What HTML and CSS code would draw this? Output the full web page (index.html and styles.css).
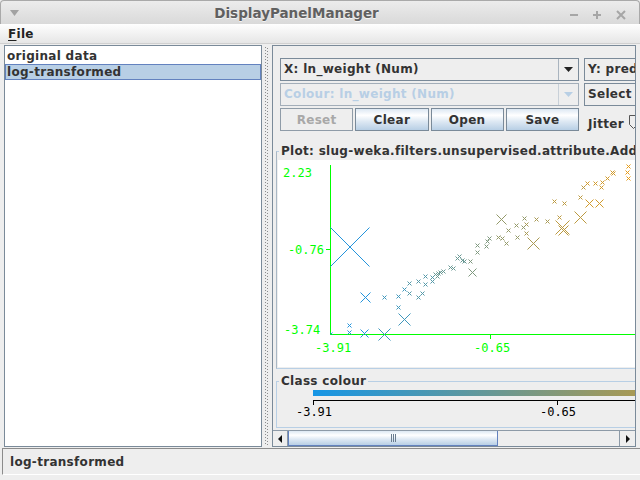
FILE: index.html
```html
<!DOCTYPE html>
<html>
<head>
<meta charset="utf-8">
<title>DisplayPanelManager</title>
<link rel="stylesheet" href="styles.css">
</head>
<body>
<div class="window">
  <div class="titlebar">
    <div class="tb-left">
      <svg width="9" height="6" viewBox="0 0 9 6"><path d="M0 0h9l-4.5 6z" fill="#a2a2a2"/></svg>
    </div>
    <div class="title">DisplayPanelManager</div>
    <div class="tb-right">
      <svg width="77" height="24" viewBox="0 0 77 24">
        <g stroke="#a6a6a6" stroke-width="2" fill="none">
          <path d="M8 14h8"/>
          <path d="M31 14h8M35 10v8"/>
          <path d="M55 10l8 8M63 10l-8 8"/>
        </g>
      </svg>
    </div>
  </div>
  <div class="menubar"><span class="menu"><u>F</u>ile</span></div>
  <div class="main">
    <div class="list">
      <div class="item">original data</div>
      <div class="item selected">log-transformed</div>
    </div>
    <div class="divider"><div class="grip"></div></div>
    <div class="pane">
      <div class="viewport">
        <div class="content">
          <div class="controls">
            <div class="col-left">
              <div class="combo">
                <span class="combo-text">X: ln_weight (Num)</span>
                <span class="combo-btn"><svg width="9" height="5" viewBox="0 0 9 5"><path d="M0 0h9l-4.5 5z" fill="#222"/></svg></span>
              </div>
              <div class="combo disabled">
                <span class="combo-text">Colour: ln_weight (Num)</span>
                <span class="combo-btn"><svg width="9" height="5" viewBox="0 0 9 5"><path d="M0 0h9l-4.5 5z" fill="#b8cfe5"/></svg></span>
              </div>
              <div class="buttons">
                <button class="btn" disabled>Reset</button>
                <button class="btn">Clear</button>
                <button class="btn">Open</button>
                <button class="btn">Save</button>
              </div>
            </div>
            <div class="col-right">
              <div class="combo">
                <span class="combo-text">Y: predicted ln_weight (Num)</span>
              </div>
              <div class="combo">
                <span class="combo-text">Select instance</span>
              </div>
              <div class="jitter">
                <span>Jitter</span>
                <svg class="thumb" width="12" height="16" viewBox="0 0 12 16"><path d="M1.5 1.5h8v9l-4 4l-4-4z" fill="#eeeeee" stroke="#555" stroke-width="1"/></svg>
              </div>
            </div>
          </div>

          <fieldset class="group plot-group">
            <legend>Plot: slug-weka.filters.unsupervised.attribute.AddExpression-Eln_weight</legend>
            <div class="plot">
              <svg width="600" height="207" viewBox="0 0 600 207">
                <g stroke="#00ff00" stroke-width="1" shape-rendering="crispEdges">
                  <path d="M52.5 5v170"/>
                  <path d="M52 174.5h548"/>
                  <path d="M212.5 174v5"/>
                  <path d="M48 89.5h5"/>
                </g>
                <g class="lbl" fill="#00ff00">
                  <text x="5" y="17">2.23</text>
                  <text x="46" y="94" text-anchor="end">-0.76</text>
                  <text x="6" y="173.5">-3.74</text>
                  <text x="37" y="191.5">-3.91</text>
                  <text x="196" y="191.5">-0.65</text>
                </g>
                <g fill="none" stroke-width="1" transform="translate(0.5 0.5)">
                  <path stroke="#e69b16" d="M348 4l4 4m0-4l-4 4M348 16l4 4m0-4l-4 4M347 10l4 4m0-4l-4 4"/>
                  <path stroke="#d19a2b" d="M333 11l4 4m0-4l-4 4M332 10l4 4m0-4l-4 4M327 16l4 4m0-4l-4 4M322 20l4 4m0-4l-4 4M315 21l4 4m0-4l-4 4M307 21l4 4m0-4l-4 4M321 25l4 4m0-4l-4 4M307 39l8 8m0-8l-8 8M317 39l8 8m0-8l-8 8"/>
                  <path stroke="#bc9a40" d="M303 25l4 4m0-4l-4 4M300 35l4 4m0-4l-4 4M296 51l12 12m0-12l-12 12M274 39l4 4m0-4l-4 4M284 41l4 4m0-4l-4 4M277 60l14 14m0-14l-14 14M280 65l10 10m0-10l-10 10M279 55l4 4m0-4l-4 4"/>
                  <path stroke="#a89954" d="M267 59l4 4m0-4l-4 4M256 57l4 4m0-4l-4 4M246 62l4 4m0-4l-4 4M249 77l12 12m0-12l-12 12M246 71l4 4m0-4l-4 4"/>
                  <path stroke="#939969" d="M244 56l4 4m0-4l-4 4M236 63l4 4m0-4l-4 4M243 65l4 4m0-4l-4 4M228 68l4 4m0-4l-4 4M237 75l4 4m0-4l-4 4M218 54l10 10m0-10l-10 10M218 75l4 4m0-4l-4 4M222 76l4 4m0-4l-4 4M226 81l4 4m0-4l-4 4"/>
                  <path stroke="#7e987e" d="M209 76l4 4m0-4l-4 4M207 79l4 4m0-4l-4 4M197 83l4 4m0-4l-4 4M206 84l4 4m0-4l-4 4M197 90l4 4m0-4l-4 4M190 99l4 4m0-4l-4 4M190 108l8 8m0-8l-8 8"/>
                  <path stroke="#699893" d="M179 94l4 4m0-4l-4 4M177 96l4 4m0-4l-4 4M182 98l4 4m0-4l-4 4M184 99l4 4m0-4l-4 4M170 105l4 4m0-4l-4 4M173 106l4 4m0-4l-4 4M163 109l4 4m0-4l-4 4M160 110l4 4m0-4l-4 4M158 111l4 4m0-4l-4 4M155 112l4 4m0-4l-4 4M157 114l4 4m0-4l-4 4"/>
                  <path stroke="#5498a8" d="M152 115l4 4m0-4l-4 4M145 114l4 4m0-4l-4 4M152 119l4 4m0-4l-4 4M138 119l4 4m0-4l-4 4M145 122l4 4m0-4l-4 4M129 121l4 4m0-4l-4 4M129 131l4 4m0-4l-4 4M142 131l4 4m0-4l-4 4M138 135l4 4m0-4l-4 4"/>
                  <path stroke="#4097bc" d="M124 127l4 4m0-4l-4 4M118 134l4 4m0-4l-4 4M104 135l4 4m0-4l-4 4M118 145l4 4m0-4l-4 4M120 153l12 12m0-12l-12 12M100 168l12 12m0-12l-12 12"/>
                  <path stroke="#2394dc" d="M82 132l10 10m0-10l-10 10M69 163l4 4m0-4l-4 4M69 170l4 4m0-4l-4 4M82 169l8 8m0-8l-8 8M52 67l39 39m0-39l-39 39"/>
                  <path stroke="#1696e6" d="M52 172l2 2m0-2l-2 2"/>
                </g>
              </svg>
            </div>
          </fieldset>

          <fieldset class="group class-group">
            <legend>Class colour</legend>
            <div class="colour-bar"></div>
            <svg class="axis" width="600" height="30" viewBox="0 0 600 30">
              <g stroke="#000" stroke-width="1" shape-rendering="crispEdges">
                <path d="M35 4.5h565"/>
                <path d="M35.5 4v5M279.5 4v5"/>
              </g>
              <g class="lbl" fill="#000" text-anchor="middle">
                <text x="36" y="19.5">-3.91</text>
                <text x="280" y="19.5">-0.65</text>
              </g>
            </svg>
          </fieldset>
        </div>
      </div>
      <div class="hscroll">
        <div class="sb-btn"><svg width="5" height="8" viewBox="0 0 5 8"><path d="M4 0v8L0 4z" fill="#111"/></svg></div>
        <div class="sb-thumb"><span class="grip-lines"></span></div>
        <div class="sb-track"></div>
        <div class="sb-btn sb-right"><svg width="5" height="8" viewBox="0 0 5 8"><path d="M1 0v8l4-4z" fill="#111"/></svg></div>
      </div>
    </div>
  </div>
  <div class="status"><div class="status-box">log-transformed</div></div>
</div>
</body>
</html>
```

FILE: styles.css
```css
* { box-sizing: border-box; }
html, body { margin: 0; padding: 0; }
body {
  background: #eeeeee;
  font-family: "DejaVu Sans", "Liberation Sans", sans-serif;
  font-size: 12px;
  font-weight: bold;
  letter-spacing: 0.3px;
  color: #333333;
}
.window {
  width: 640px;
  height: 480px;
  display: flex;
  flex-direction: column;
  overflow: hidden;
  background: #eeeeee;
}

/* title bar */
.titlebar {
  flex: none;
  height: 24px;
  display: flex;
  align-items: center;
  background: linear-gradient(#ececec, #d9d9d9);
  border: 1px solid #a9a9a9;
  border-bottom: none;
  border-radius: 4px 4px 0 0;
  color: #606060;
  letter-spacing: 0;
}
.tb-left {
  width: 30px;
  padding-left: 9px;
  display: flex;
  align-items: center;
}
.title {
  flex: 1;
  text-align: center;
  font-size: 13.5px;
  text-shadow: 0 1px 0 rgba(255, 255, 255, 0.7);
}
.tb-right { width: 77px; display: flex; }

/* menu bar */
.menubar {
  flex: none;
  height: 20px;
  display: flex;
  align-items: center;
  padding-left: 8px;
  background: linear-gradient(#fefefe, #e6e6e6);
  border-bottom: 1px solid #d0d0d0;
  color: #222;
}
.menu u { text-decoration: underline; text-underline-offset: 2px; }

/* main split */
.main {
  flex: none;
  height: 404px;
  display: flex;
  padding: 1px 0 1px 4px;
}
.list {
  width: 258px;
  flex: none;
  background: #ffffff;
  border: 1px solid #7a8a99;
  padding-top: 2px;
}
.item {
  height: 16px;
  line-height: 14px;
  padding-left: 1px;
  border: 1px solid transparent;
  white-space: nowrap;
}
.item.selected {
  background: #b8cfe5;
  border-color: #6382bf;
}
.divider {
  width: 10px;
  flex: none;
  padding: 2px 0 2px 3px;
}
.grip {
  width: 3px;
  height: 100%;
  background-image:
    repeating-linear-gradient(#8c8c8c 0 1px, transparent 1px 3px),
    repeating-linear-gradient(transparent 0 1px, #8c8c8c 1px 2px, transparent 2px 3px);
  background-size: 1px 100%, 1px 100%;
  background-position: 0 0, 2px 0;
  background-repeat: no-repeat;
}
.pane {
  width: 364px;
  flex: none;
  border: 1px solid #7a8a99;
  display: flex;
  flex-direction: column;
}
.viewport {
  flex: 1;
  overflow: hidden;
}
.content { width: 800px; }

/* controls */
.controls {
  display: flex;
  gap: 5px;
  margin: 12px 0 0 7px;
}
.col-left, .col-right {
  display: flex;
  flex-direction: column;
  gap: 2px;
}
.col-left { width: 299px; }
.col-right { width: 240px; }
.combo {
  height: 23px;
  display: flex;
  border: 1px solid #7a8a99;
  background: #eeeeee;
}
.combo-text {
  flex: 1;
  padding-left: 3px;
  line-height: 21px;
  white-space: nowrap;
  overflow: hidden;
}
.combo-btn {
  width: 20px;
  display: flex;
  align-items: center;
  justify-content: center;
  border-left: 1px solid #a9b4bf;
}
.combo.disabled { border-color: #a3aeb9; }
.combo.disabled .combo-text { color: #b8cfe5; }
.combo.disabled .combo-btn { border-left-color: #c8d0d8; }
.buttons {
  display: grid;
  grid-template-columns: repeat(4, 1fr);
  gap: 2px;
}
.btn {
  height: 23px;
  margin: 0;
  padding: 0;
  font: inherit;
  letter-spacing: inherit;
  color: #333333;
  border: 1px solid #7a8a99;
  background: linear-gradient(#dde8f3 0%, #ffffff 30%, #dde8f3 60%, #b8cfe5 100%);
}
.btn:disabled {
  background: #eeeeee;
  color: #a8a8a8;
  border-color: #8f9ca8;
}
.jitter {
  height: 23px;
  display: flex;
  align-items: flex-end;
  gap: 4px;
  padding-left: 4px;
  line-height: 14px;
}
.thumb { margin-bottom: 1px; }

/* titled groups */
.group {
  margin: 0;
  border: 1px solid #b8cfe5;
  padding: 2px 0 1px 1px;
  min-width: 0;
}
.group legend {
  padding: 0 2px;
  margin-left: 1px;
  line-height: 14px;
  white-space: nowrap;
  color: #333333;
}
.plot-group { margin: 13px 0 0 3px; border-left-color: #a9b7c4; }
.plot {
  height: 207px;
  background: #ffffff;
}
.plot svg { display: block; }
.lbl {
  font-family: "DejaVu Sans Mono", monospace;
  font-size: 12px;
  font-weight: normal;
  letter-spacing: 0;
}
.class-group { margin: 5px 0 0 3px; }
.colour-bar {
  margin-left: 35px;
  width: 460px;
  height: 6px;
  background: linear-gradient(to right, #1696e6, #e69b16);
}
.axis { display: block; }

/* horizontal scrollbar */
.hscroll {
  flex: none;
  height: 16px;
  display: flex;
  border-top: 1px solid #8d9aa7;
  background: #eeeeee;
}
.sb-btn {
  width: 15px;
  display: flex;
  align-items: center;
  justify-content: center;
  border-right: 1px solid #8d9aa7;
  background: #eeeeee;
}
.sb-right {
  width: 16px;
  border-right: none;
  border-left: 1px solid #8d9aa7;
}
.sb-thumb {
  width: 210px;
  border: 1px solid #6382bf;
  border-top: none;
  background: linear-gradient(#dde8f3 0%, #ffffff 30%, #dde8f3 60%, #b8cfe5 100%);
  display: flex;
  align-items: center;
  justify-content: center;
}
.grip-lines {
  width: 5px;
  height: 8px;
  background-image: repeating-linear-gradient(to right, #6a7c8e 0 1px, transparent 1px 2px);
}
.sb-track { flex: 1; }

/* status */
.status {
  flex: none;
  height: 32px;
  padding: 0 0 5px 2px;
}
.status-box {
  height: 27px;
  border-top: 1px solid #8c8c8c;
  border-left: 1px solid #8c8c8c;
  border-bottom: 1px solid #ffffff;
  padding-left: 7px;
  display: flex;
  align-items: center;
}
```
